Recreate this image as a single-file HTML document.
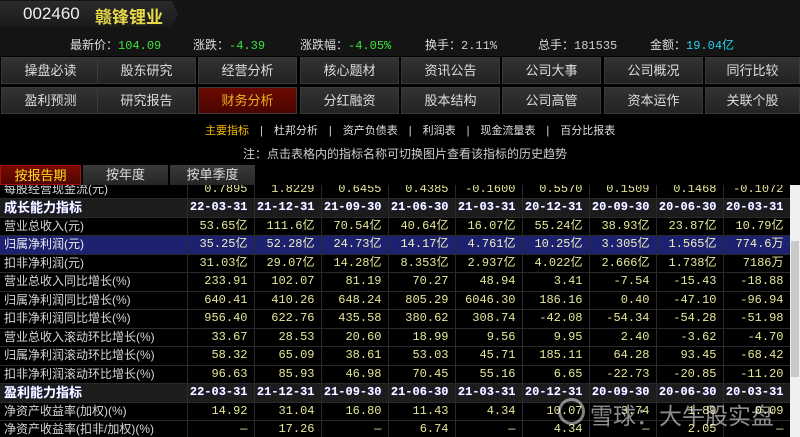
<!DOCTYPE html>
<html><head><meta charset="utf-8"><style>
*{margin:0;padding:0;box-sizing:border-box}
body{width:800px;height:437px;background:#000;overflow:hidden;font-family:"Liberation Sans","Noto Sans CJK SC",sans-serif;position:relative;color:#ddd}
.hdr{position:absolute;left:0;top:0;width:800px;height:30px;background:#141414}
.title{position:absolute;left:0;top:1px;width:178px;height:26px;background:linear-gradient(#2a2a2a,#1a1a1a);clip-path:polygon(0 0,172px 0,178px 13px,172px 26px,0 26px)}
.title .c{position:absolute;left:23px;top:3px;font-size:17px;color:#eee}
.title .n{position:absolute;left:95px;top:2px;font-size:17px;color:#e6d84a;font-weight:bold}
.q{position:absolute;top:30px;left:0;width:800px;height:26px;background:#141414;font-size:12px}
.q span{position:absolute;top:6px;white-space:nowrap}
.g{color:#3de23d;font-family:"Liberation Mono",monospace}
.w{color:#ccc;font-family:"Liberation Mono",monospace}
.cy{color:#22d3e8;font-family:"Liberation Mono",monospace}
.nav{position:absolute;left:0;width:800px;height:28px}
.nav div{position:absolute;top:0;width:99px;height:27px;background:linear-gradient(#333,#222);border:1px solid #3a3a3a;color:#ddd;font-size:13px;text-align:center;line-height:26px}
.nav div.on{background:linear-gradient(#6a0a00,#4a0500);color:#f0b020}
.sub{position:absolute;top:122px;left:205px;font-size:11px;color:#ddd;white-space:nowrap}
.sub b{font-weight:normal;color:#f5b800}
.note{position:absolute;top:145px;left:243px;font-size:12px;color:#ccc}
.tab{position:absolute;top:165px;height:20px;font-size:13px;text-align:center;line-height:20px;background:linear-gradient(#3a3a3a,#262626);color:#ddd}
.tab.on{background:linear-gradient(#7a0a00,#500500);color:#f5e020;border:1px solid #a01010}
.tb{position:absolute;top:185px;left:0;width:790px;height:252px;overflow:hidden}
table{position:absolute;top:-5px;left:0;border-collapse:collapse;width:790px;table-layout:fixed}
td{height:18.5px;padding:0 6px 0 0;line-height:17px;border-bottom:1px solid #2a2a2a;border-right:1px solid #2a2a2a;font-size:12px;color:#e6e69a;text-align:right;font-family:"Liberation Mono","Noto Sans CJK SC",monospace;white-space:nowrap;overflow:hidden}
td:first-child{text-align:left;color:#d6d6d6;padding-left:4px;font-family:"Liberation Sans","Noto Sans CJK SC",sans-serif}
tr.s td{background:#1c1c1c;color:#fff;font-weight:bold;text-shadow:0 0 1px #44f}
tr.s td:first-child{color:#fff;font-size:13px}
tr.h td{background:#1c2170;color:#f0f0c0}
tr.h td:first-child{color:#eee}
.sb{position:absolute;left:790px;top:185px;width:10px;height:252px;background:#f0f0f0}
.sb i{position:absolute;left:1px;top:56px;width:8px;height:136px;background:#c8c8c8}
.wm{position:absolute;left:590px;top:397px;font-size:23px;color:rgba(255,255,255,.55);white-space:nowrap}
.wmc{position:absolute;left:558px;top:398px;width:27px;height:27px;border:3px solid rgba(255,255,255,.5);border-radius:50%}
</style></head><body>
<div class="hdr"><div class="title"><span class="c">002460</span><span class="n">赣锋锂业</span></div></div>
<div class="q">
<span style="left:70px">最新价：<i class="g" style="font-style:normal">104.09</i></span>
<span style="left:193px">涨跌：<i class="g" style="font-style:normal">-4.39</i></span>
<span style="left:300px">涨跌幅：<i class="g" style="font-style:normal">-4.05%</i></span>
<span style="left:425px">换手：<i class="w" style="font-style:normal">2.11%</i></span>
<span style="left:538px">总手：<i class="w" style="font-style:normal">181535</i></span>
<span style="left:650px">金额：<i class="cy" style="font-style:normal">19.04亿</i></span>
</div>
<div class="nav" style="top:57px">
<div style="left:1px">操盘必读</div><div style="left:97px">股东研究</div><div style="left:198px">经营分析</div><div style="left:300px">核心题材</div><div style="left:401px">资讯公告</div><div style="left:502px">公司大事</div><div style="left:604px">公司概况</div><div style="left:705px;width:95px">同行比较</div>
</div>
<div class="nav" style="top:87px">
<div style="left:1px">盈利预测</div><div style="left:97px">研究报告</div><div class="on" style="left:198px">财务分析</div><div style="left:300px">分红融资</div><div style="left:401px">股本结构</div><div style="left:502px">公司高管</div><div style="left:604px">资本运作</div><div style="left:705px;width:95px">关联个股</div>
</div>
<div class="sub"><b>主要指标</b>　|　杜邦分析　|　资产负债表　|　利润表　|　现金流量表　|　百分比报表</div>
<div class="note">注：点击表格内的指标名称可切换图片查看该指标的历史趋势</div>
<div class="tab on" style="left:0;width:81px">按报告期</div>
<div class="tab" style="left:83px;width:85px">按年度</div>
<div class="tab" style="left:170px;width:85px">按单季度</div>
<div class="tb"><table>
<colgroup><col style="width:187px"><col span="9" style="width:67px"></colgroup>
<tr><td>每股经营现金流(元)</td><td>0.7895</td><td>1.8229</td><td>0.6455</td><td>0.4385</td><td>-0.1600</td><td>0.5570</td><td>0.1509</td><td>0.1468</td><td>-0.1072</td></tr>
<tr class="s"><td>成长能力指标</td><td>22-03-31</td><td>21-12-31</td><td>21-09-30</td><td>21-06-30</td><td>21-03-31</td><td>20-12-31</td><td>20-09-30</td><td>20-06-30</td><td>20-03-31</td></tr>
<tr><td>营业总收入(元)</td><td>53.65亿</td><td>111.6亿</td><td>70.54亿</td><td>40.64亿</td><td>16.07亿</td><td>55.24亿</td><td>38.93亿</td><td>23.87亿</td><td>10.79亿</td></tr>
<tr class="h"><td>归属净利润(元)</td><td>35.25亿</td><td>52.28亿</td><td>24.73亿</td><td>14.17亿</td><td>4.761亿</td><td>10.25亿</td><td>3.305亿</td><td>1.565亿</td><td>774.6万</td></tr>
<tr><td>扣非净利润(元)</td><td>31.03亿</td><td>29.07亿</td><td>14.28亿</td><td>8.353亿</td><td>2.937亿</td><td>4.022亿</td><td>2.666亿</td><td>1.738亿</td><td>7186万</td></tr>
<tr><td>营业总收入同比增长(%)</td><td>233.91</td><td>102.07</td><td>81.19</td><td>70.27</td><td>48.94</td><td>3.41</td><td>-7.54</td><td>-15.43</td><td>-18.88</td></tr>
<tr><td>归属净利润同比增长(%)</td><td>640.41</td><td>410.26</td><td>648.24</td><td>805.29</td><td>6046.30</td><td>186.16</td><td>0.40</td><td>-47.10</td><td>-96.94</td></tr>
<tr><td>扣非净利润同比增长(%)</td><td>956.40</td><td>622.76</td><td>435.58</td><td>380.62</td><td>308.74</td><td>-42.08</td><td>-54.34</td><td>-54.28</td><td>-51.98</td></tr>
<tr><td>营业总收入滚动环比增长(%)</td><td>33.67</td><td>28.53</td><td>20.60</td><td>18.99</td><td>9.56</td><td>9.95</td><td>2.40</td><td>-3.62</td><td>-4.70</td></tr>
<tr><td>归属净利润滚动环比增长(%)</td><td>58.32</td><td>65.09</td><td>38.61</td><td>53.03</td><td>45.71</td><td>185.11</td><td>64.28</td><td>93.45</td><td>-68.42</td></tr>
<tr><td>扣非净利润滚动环比增长(%)</td><td>96.63</td><td>85.93</td><td>46.98</td><td>70.45</td><td>55.16</td><td>6.65</td><td>-22.73</td><td>-20.85</td><td>-11.20</td></tr>
<tr class="s"><td>盈利能力指标</td><td>22-03-31</td><td>21-12-31</td><td>21-09-30</td><td>21-06-30</td><td>21-03-31</td><td>20-12-31</td><td>20-09-30</td><td>20-06-30</td><td>20-03-31</td></tr>
<tr><td>净资产收益率(加权)(%)</td><td>14.92</td><td>31.04</td><td>16.80</td><td>11.43</td><td>4.34</td><td>10.07</td><td>3.74</td><td>1.89</td><td>0.09</td></tr>
<tr><td>净资产收益率(扣非/加权)(%)</td><td>—</td><td>17.26</td><td>—</td><td>6.74</td><td>—</td><td>4.34</td><td>—</td><td>2.05</td><td>—</td></tr>
</table></div>
<div class="sb"><i></i></div>
<div class="wmc"></div>
<div class="wm">雪球：大牛股实盘</div>
</body></html>
